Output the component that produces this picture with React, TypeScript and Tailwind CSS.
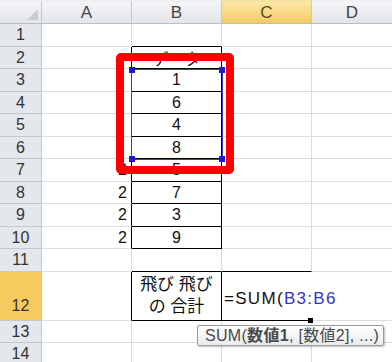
import React from 'react';

const font = { fontFamily: '"Liberation Sans", "Noto Sans CJK JP", sans-serif' };

const rowHeights = ['h-[23px]', 'h-[22px]', 'h-[23px]', 'h-[22px]', 'h-[23px]', 'h-[22px]', 'h-[23px]', 'h-[22px]', 'h-[23px]', 'h-[22px]', 'h-[23px]', 'h-[49px]', 'h-[22px]', 'h-[22px]'];

const colA: Record<number, string> = { 7: '2', 8: '2', 9: '2', 10: '2' };
const colB: Record<number, string> = { 2: 'データ', 3: '1', 4: '6', 5: '4', 6: '8', 7: '5', 8: '7', 9: '3', 10: '9' };

const grid = 'border-[#dadcdd]';

const App = () => {
  return (
    <div className="relative w-[392px] h-[362px] overflow-hidden bg-white text-[16px] text-[#111]" style={font}>
      {/* column headers */}
      <div className="flex h-[24px] border-b border-[#b9bec6]">
        <div className="relative w-[42px] border-r border-[#c4c8ce] bg-linear-to-b from-[#f4f5f7] to-[#e2e5e9] border-t-2 border-t-[#eef0f3]">
          <div className="absolute right-[3px] bottom-[3px] w-0 h-0 border-l-[11px] border-l-transparent border-b-[11px] border-b-[#c9cdd3]" />
        </div>
        {['A', 'B', 'C'].map((c) => (
          <div
            key={c}
            className={`w-[90px] flex items-center justify-center border-r border-[#c4c8ce] border-t-2 text-[17px] ${
              c === 'C'
                ? 'bg-linear-to-b from-[#fbe7a6] to-[#f4cb62] text-[#5a4a10] border-t-[#f6e2a0]'
                : 'bg-linear-to-b from-[#f4f5f7] to-[#e2e5e9] text-[#444] border-t-[#eef0f3]'
            }`}
          >
            {c}
          </div>
        ))}
        <div className="flex-1 flex items-center justify-center bg-linear-to-b from-[#f4f5f7] to-[#e2e5e9] text-[#444] text-[17px] border-t-2 border-t-[#eef0f3]">
          D
        </div>
      </div>

      {rowHeights.map((h, i) => {
        const r = i + 1;
        const inBox = r >= 2 && r <= 10;
        const isSum = r === 12;
        return (
          <div key={r} className={`flex ${h}`}>
            <div
              className={`w-[42px] flex justify-center border-r border-b border-[#c4c8ce] text-[#333] ${
                isSum ? 'items-end pb-[2px] bg-[#f7ca5e]' : 'items-center bg-[#e4e7eb]'
              }`}
            >
              {r}
            </div>
            <div
              className={`w-[90px] flex items-center justify-end pr-[4px] border-b ${grid} border-r ${
                inBox || isSum ? 'border-r-black' : ''
              }`}
            >
              {colA[r]}
            </div>
            {isSum ? (
              <div className="w-[90px] flex flex-col items-center justify-center border-r border-b border-black text-[17px] leading-[22px]">
                <span>飛び 飛び</span>
                <span>の 合計</span>
              </div>
            ) : (
              <div
                className={`w-[90px] flex justify-center border-b border-r ${grid} ${
                  r === 2 ? 'items-start pt-[5px] leading-[16px]' : 'items-center'
                } ${inBox ? 'border-r-black border-b-black' : ''} ${r === 1 || r === 11 ? 'border-b-black' : ''}`}
              >
                {colB[r]}
              </div>
            )}
            {isSum ? (
              <div className="relative w-[91px] flex items-center pl-[2px] pt-[5px] border-b border-black text-[17px] tracking-[1.3px] whitespace-nowrap">
                <span>=SUM(</span>
                <span className="text-[#3535c8]">B3:B6</span>
                <div className="absolute right-[0px] bottom-[-3px] w-[5px] h-[5px] bg-black" />
              </div>
            ) : (
              <div className={`w-[90px] border-r border-b ${grid} ${r === 11 ? 'border-b-black' : ''}`} />
            )}
            <div className={`flex-1 border-b ${grid}`} />
          </div>
        );
      })}

      {/* selection range B3:B6 */}
      <div className="absolute left-[131px] top-[69px] w-[92px] h-[91px] border border-[#3b3bd4]">
        <div className="absolute -left-[3px] -top-[3px] w-[6px] h-[6px] bg-[#1a1ae6]" />
        <div className="absolute -right-[3px] -top-[3px] w-[6px] h-[6px] bg-[#1a1ae6]" />
        <div className="absolute -left-[3px] -bottom-[3px] w-[6px] h-[6px] bg-[#1a1ae6]" />
        <div className="absolute -right-[3px] -bottom-[3px] w-[6px] h-[6px] bg-[#1a1ae6]" />
      </div>

      {/* red highlight */}
      <div className="absolute left-[116px] top-[53px] w-[118px] h-[121px] border-8 border-[#ff0000] rounded-[5px]" />

      {/* function tooltip */}
      <div className="absolute left-[197px] top-[325px] w-[187px] h-[21px] flex items-center pl-[7px] rounded-[2px] border border-[#9a9a9a] bg-linear-to-b from-[#ffffff] to-[#e9eaec] shadow-[1px_1px_2px_rgba(0,0,0,0.25)] text-[16px] tracking-[0.3px] text-[#4a4a4a] whitespace-nowrap">
        <span>SUM(</span>
        <span className="font-bold">数値1</span>
        <span>, [数値2], ...)</span>
      </div>
    </div>
  );
};

export default App;
